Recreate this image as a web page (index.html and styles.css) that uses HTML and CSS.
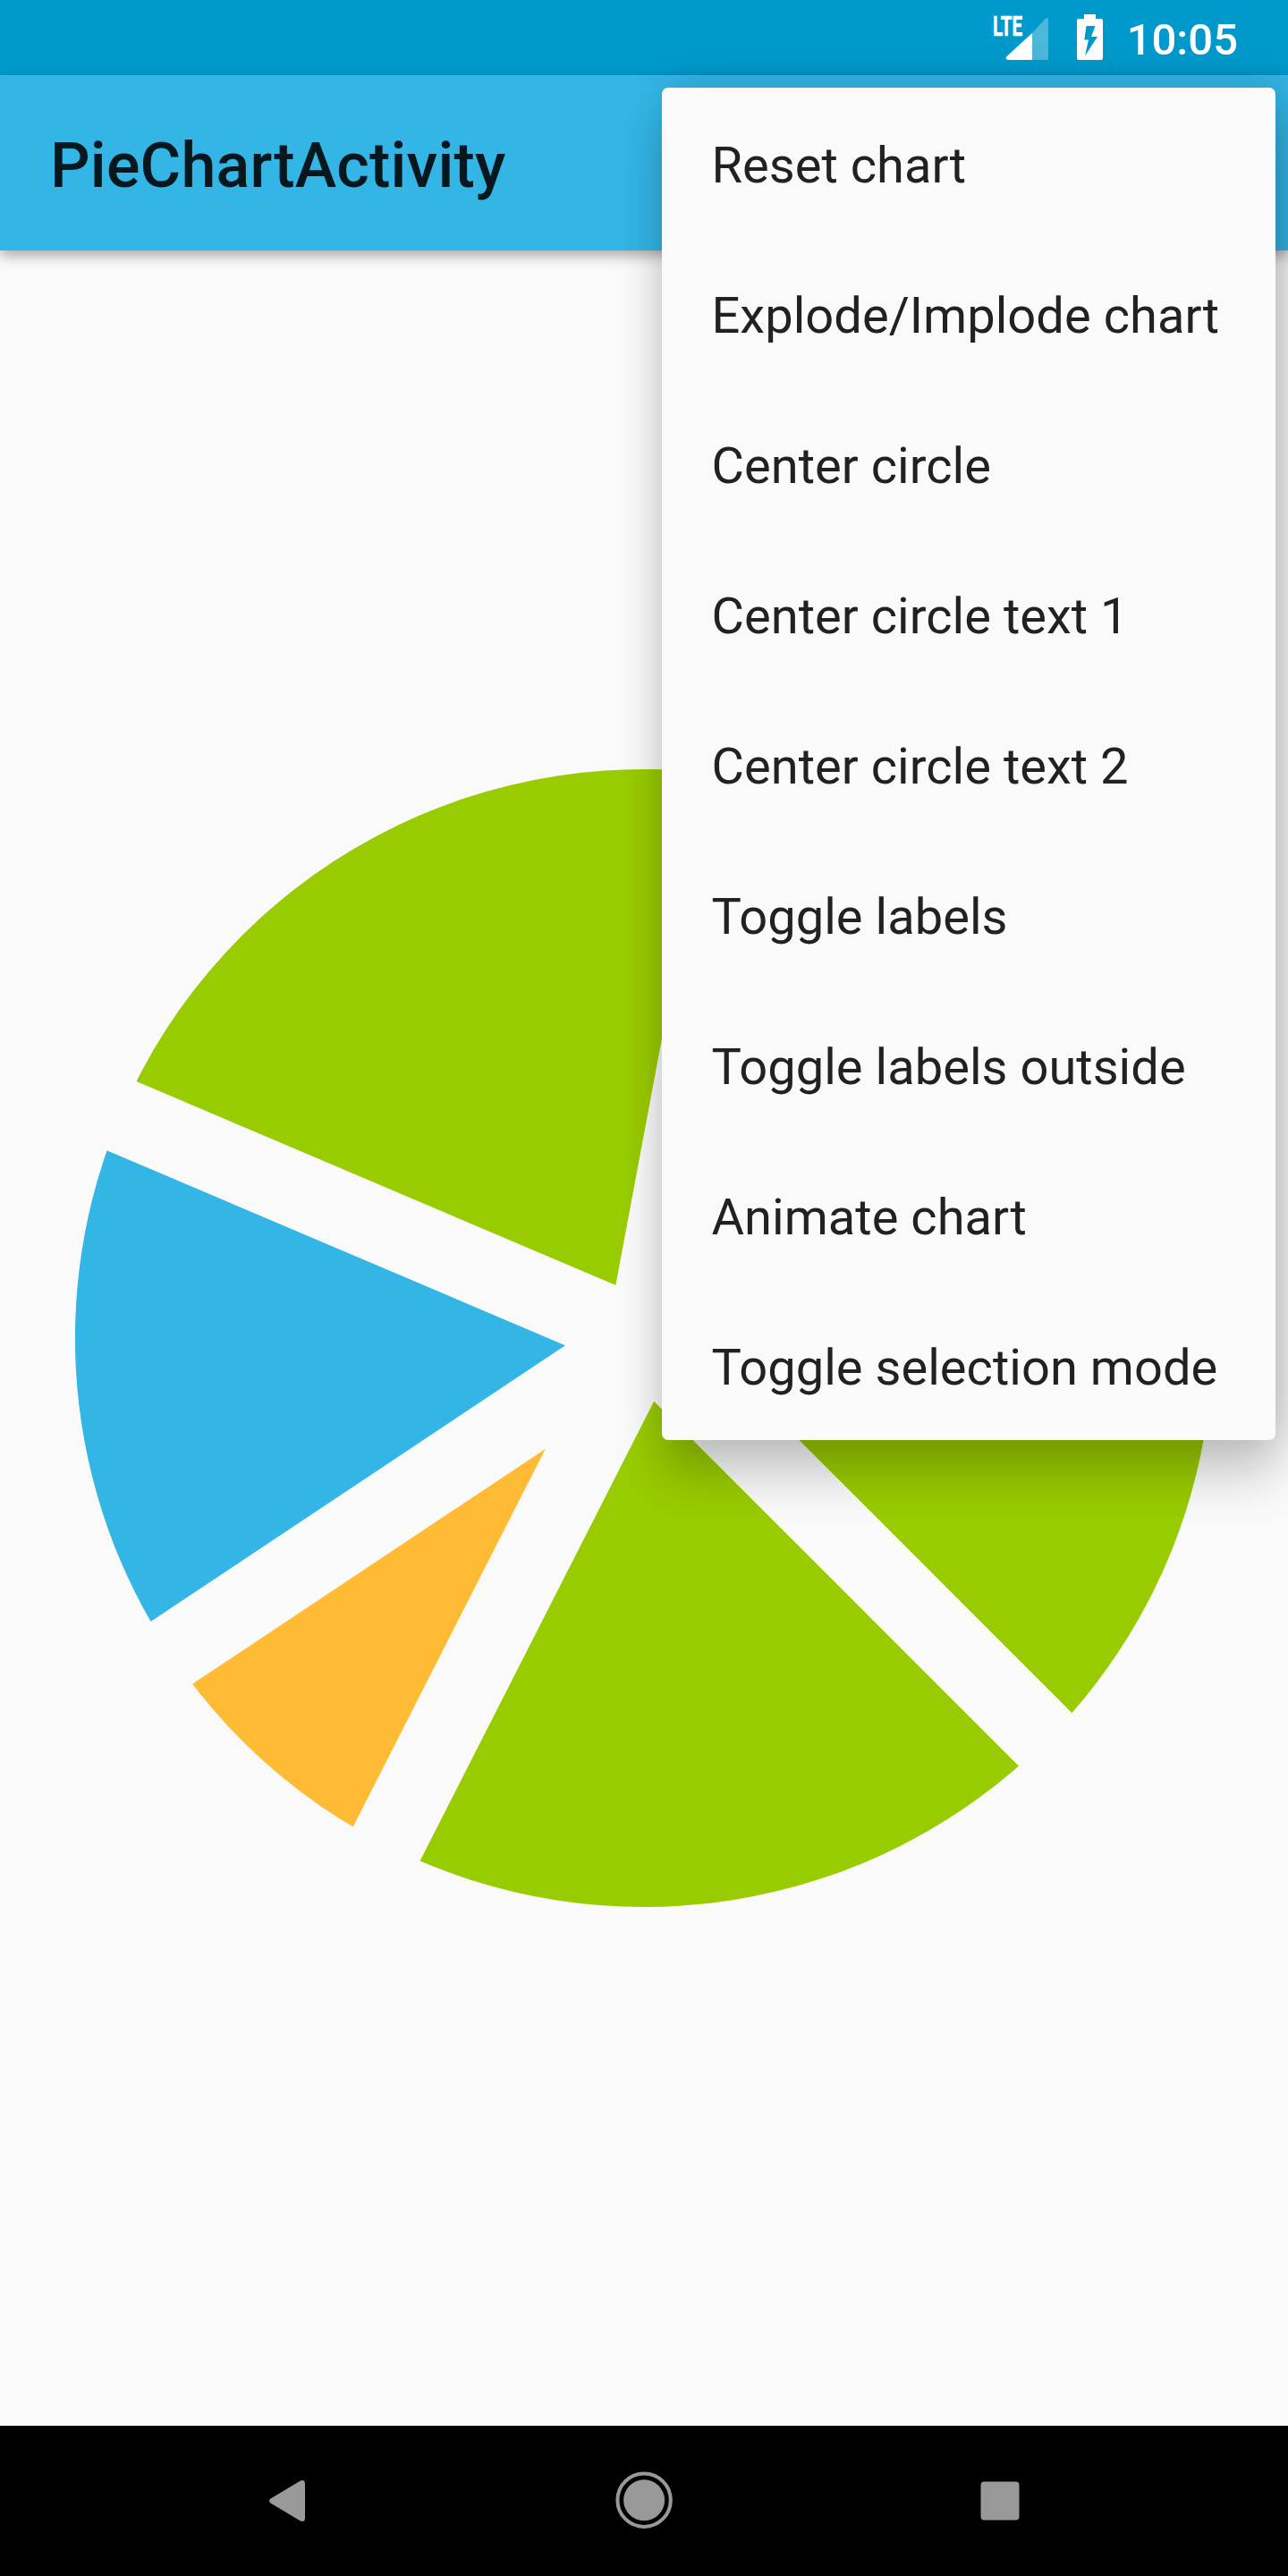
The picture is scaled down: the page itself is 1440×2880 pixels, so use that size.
FILE: index.html
```html
<!DOCTYPE html>
<html lang="en">
<head>
<meta charset="utf-8">
<title>PieChartActivity</title>
<link rel="stylesheet" href="styles.css">
</head>
<body>
<div class="screen">
  <header class="status-bar">
    <svg class="signal-icon" width="66" height="64" viewBox="-2 -12 66 64" aria-hidden="true">
      <path d="M58.500 5Q62 2.500 62 6V49q0 2-2 2H44V21Z" fill="#fff" fill-opacity=".3"/>
      <path d="M44 21V51H17q-4-1-1.500-4Z" fill="#fff"/>
      <text class="network" x="0" y="24" textLength="33" lengthAdjust="spacingAndGlyphs">LTE</text>
    </svg>
    <svg class="battery-icon" width="29" height="51" viewBox="0 0 29 51" aria-hidden="true">
      <path fill="#fff" fill-rule="evenodd" d="M8 0H21V5H27q2 0 2 2V49q0 2-2 2H2q-2 0-2-2V7q0-2 2-2H8ZM10.500 13 8.300 28.500H13L9 46.500 23 25H16L20.500 13Z"/>
    </svg>
    <span class="clock">10:05</span>
  </header>
  <div class="app-bar"><h1 class="title">PieChartActivity</h1></div>
  <main class="content">
    <svg class="pie" width="1440" height="2432" viewBox="-720 -1216 1440 2432">
      <g class="slices">
        <path class="green" d="M0 0 117-625.100A636 636 0 0 1 449.700 449.700Z"/>
        <path class="green" d="M0 0 449.700 449.700A636 636 0 0 1-288.500 566.800Z"/>
        <path class="orange" d="M0 0-288.500 566.800A636 636 0 0 1-529.400 352.600Z"/>
        <path class="blue" d="M0 0-529.400 352.600A636 636 0 0 1-585.300-248.900Z"/>
        <path class="green" d="M0 0-585.300-248.900A636 636 0 0 1 117-625.100Z"/>
      </g>
      <path class="separators" d="M0 0 128.700-687.600M0 0 494.700 494.700M0 0-317.400 623.500M0 0-582.300 387.900M0 0-643.800-273.800"/>
    </svg>
  </main>
  <nav class="nav-bar">
    <svg width="90" height="90" viewBox="0 0 90 90" aria-label="Back"><path d="M22.500 43.500 55.500 23.700Q61 21.500 61 27V65Q61 70.500 55.500 68.300L22.500 48.500Q19.500 46 22.500 43.500Z"/></svg>
    <svg width="90" height="90" viewBox="0 0 90 90" aria-label="Home"><circle cx="43.100" cy="45.200" r="23"/><circle class="ring" cx="43.100" cy="45.200" r="29.700"/></svg>
    <svg width="90" height="90" viewBox="0 0 90 90" aria-label="Overview"><rect x="23.500" y="24.500" width="43" height="43" rx="4"/></svg>
  </nav>
  <ul class="menu">
    <li>Reset chart</li>
    <li>Explode/Implode chart</li>
    <li>Center circle</li>
    <li>Center circle text 1</li>
    <li>Center circle text 2</li>
    <li>Toggle labels</li>
    <li>Toggle labels outside</li>
    <li>Animate chart</li>
    <li>Toggle selection mode</li>
  </ul>
</div>
</body>
</html>
```
FILE: styles.css
```css
* { box-sizing: border-box; }
body { margin: 0; font-family: Roboto, sans-serif; background: #fafafa; }
.screen {
  position: relative;
  display: flex;
  flex-direction: column;
  width: 1440px;
  height: 2880px;
  overflow: hidden;
}
.status-bar {
  display: flex;
  justify-content: flex-end;
  align-items: flex-start;
  height: 84px;
  padding: 16px 56px 0 0;
  background: #0099cc;
  color: #fff;
}
.signal-icon { margin: -12px 30px 0 0; }
.network { font: 700 31px Roboto, sans-serif; fill: #fff; stroke: #fff; stroke-width: .6; }
.battery-icon { margin-right: 27px; }
.clock { font-size: 49px; font-weight: 500; line-height: 57px; }
.app-bar {
  z-index: 1;
  display: flex;
  align-items: center;
  height: 196px;
  padding: 5px 56px 0;
  background: #33b5e5;
  box-shadow: 0 6px 14px rgba(0, 0, 0, .32);
}
.title { margin: 0; font-size: 70px; font-weight: 500; letter-spacing: .2px; color: rgba(0, 0, 0, .87); }
.content { flex: 1; min-height: 0; }
.pie { display: block; }
.green { fill: #99cc00; }
.blue { fill: #33b5e5; }
.orange { fill: #ffbb33; }
.separators { stroke: #fafafa; stroke-width: 84; fill: none; }
.nav-bar {
  display: flex;
  align-items: center;
  justify-content: space-between;
  height: 168px;
  padding: 0 277px 2px 280px;
  background: #000;
  fill: #999;
}
.ring { fill: none; stroke: #999; stroke-width: 4; }
.menu {
  position: absolute;
  z-index: 2;
  top: 98px;
  right: 14px;
  width: 686px;
  margin: 0;
  padding: 0;
  list-style: none;
  border-radius: 7px;
  background: #fafafa;
  color: #212121;
  font-size: 56px;
  letter-spacing: .04px;
  box-shadow: 0 45px 52px rgba(0, 0, 0, .16), 10px 0 50px rgba(0, 0, 0, .18);
}
.menu li { height: 168px; padding: 3px 55px 0 55.5px; line-height: 168px; white-space: nowrap; }
```
